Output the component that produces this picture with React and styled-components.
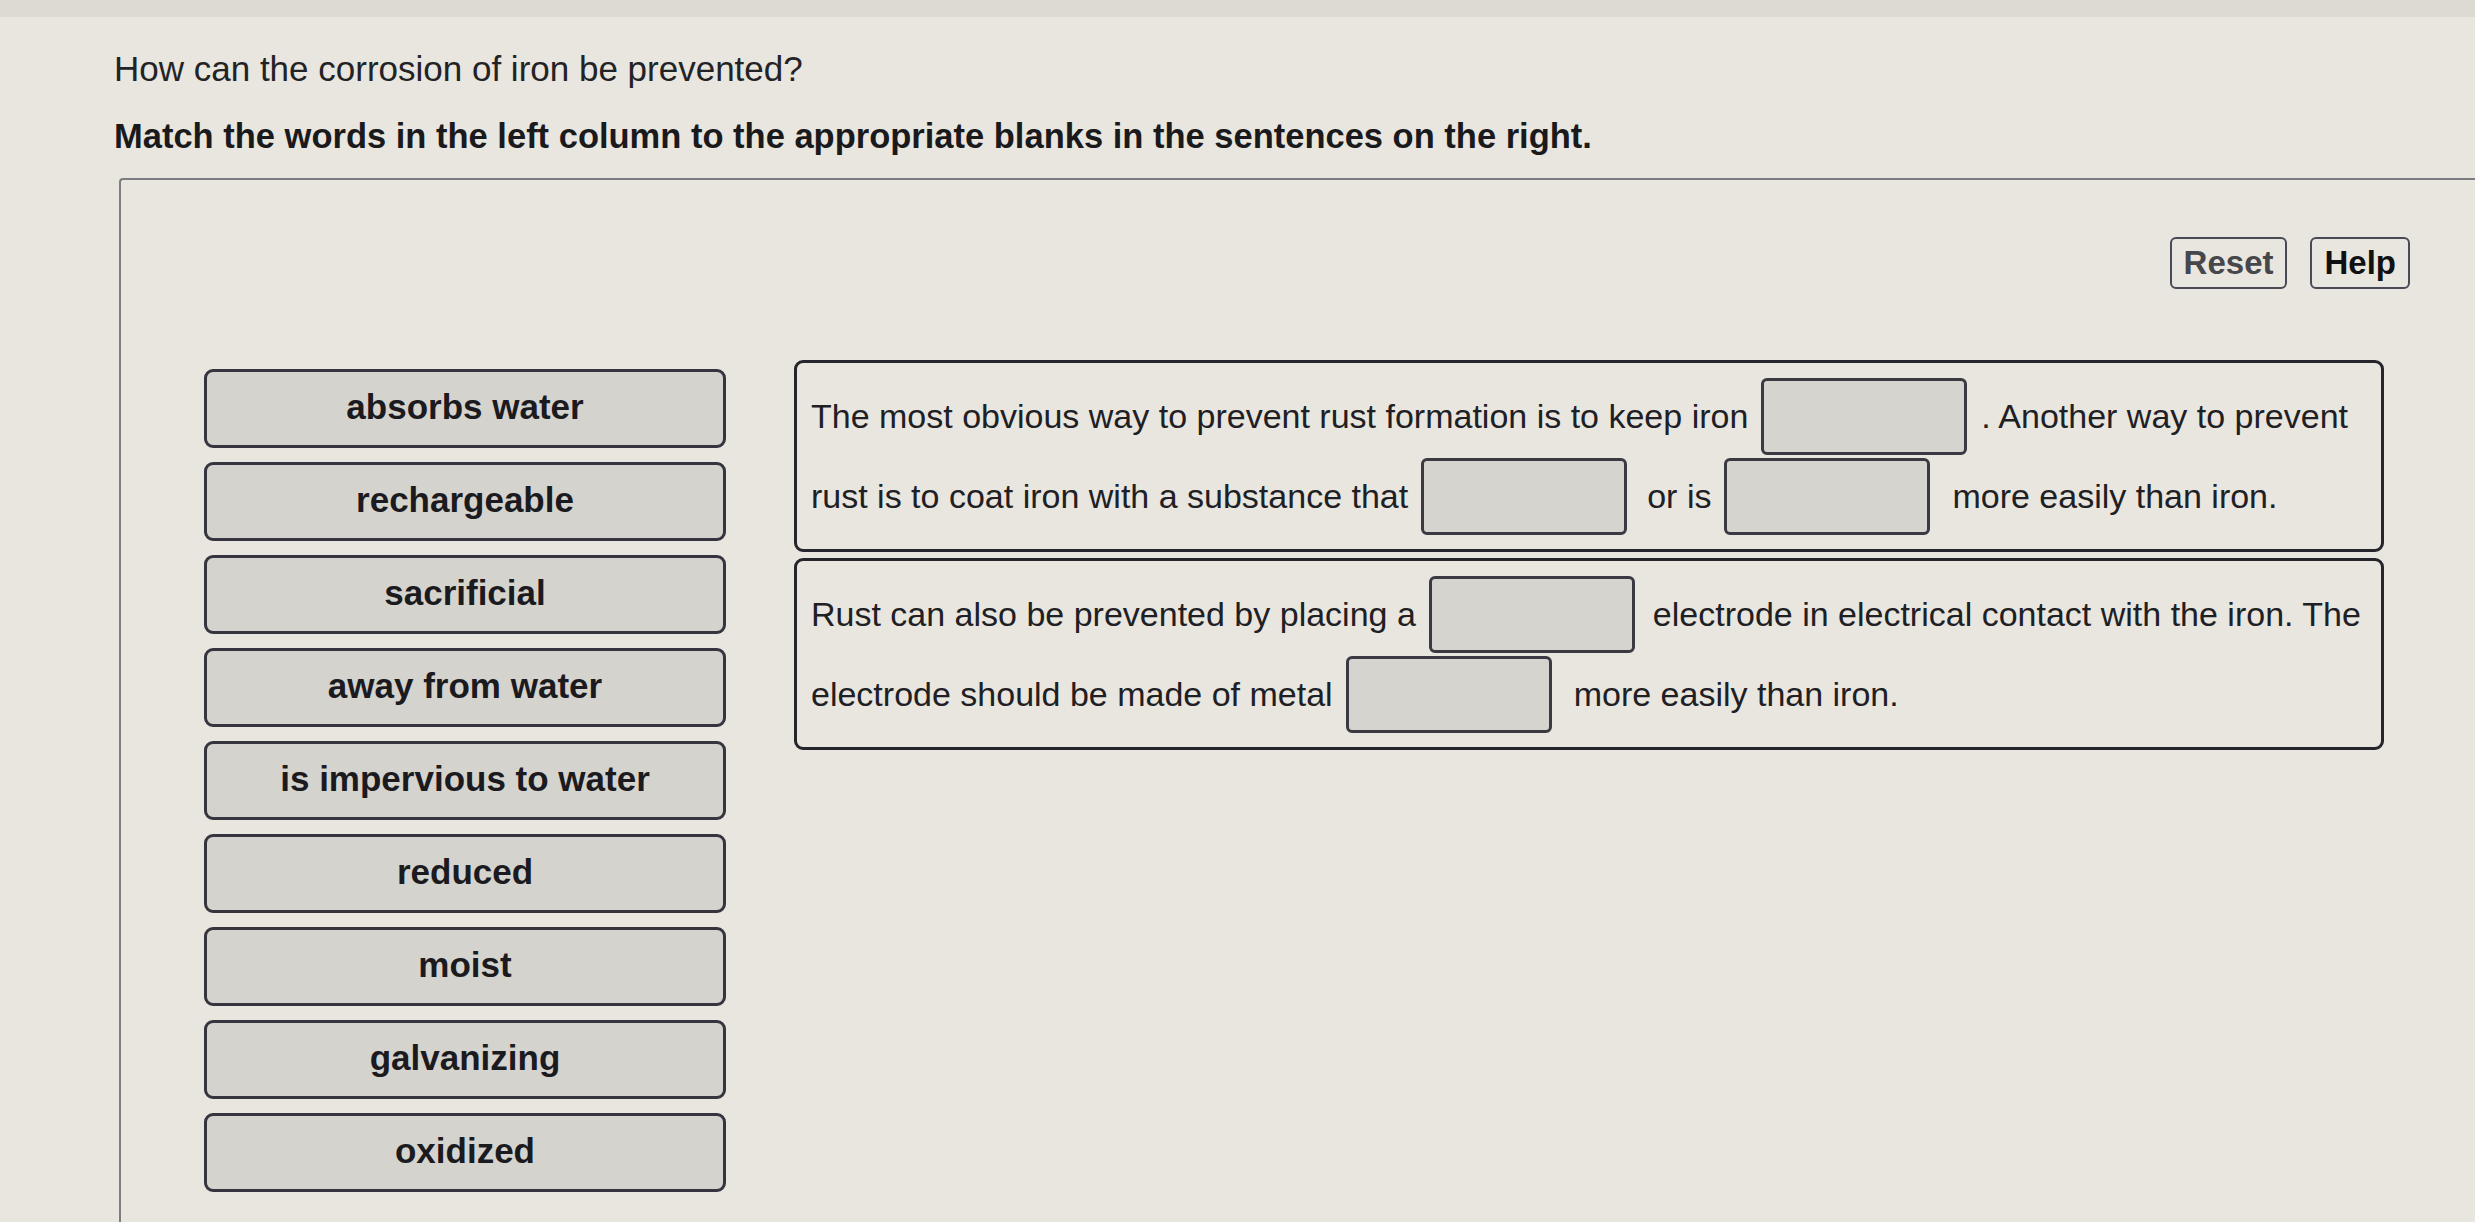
import React from 'react';
import styled, { createGlobalStyle } from 'styled-components';

const GlobalStyle = createGlobalStyle`
  html, body {
    margin: 0;
    padding: 0;
    background: #e8e6df;
  }
  body {
    font-family: "Liberation Sans", Arial, sans-serif;
    color: #1d1d20;
  }
`;

const Page = styled.div`
  min-height: 1222px;
  box-sizing: border-box;
  border-top: 17px solid #dcdad3;
  padding-top: 32px;
  overflow: hidden;
`;

const Intro = styled.div`
  padding-left: 114px;
`;

const Question = styled.p`
  margin: 0;
  font-size: 35px;
  line-height: 40px;
  font-weight: 400;
  color: #232326;
`;

const Instruction = styled.p`
  margin: 27px 0 0;
  font-size: 34.5px;
  line-height: 40px;
  font-weight: 700;
  color: #1a1a1d;
`;

const Panel = styled.section`
  margin: 22px 0 0 119px;
  border-top: 2px solid #7d7c80;
  border-left: 2px solid #7d7c80;
  border-top-left-radius: 4px;
  padding: 57px 65px 40px 0;
  min-height: 1000px;
  box-sizing: border-box;
`;

const Toolbar = styled.div`
  display: flex;
  justify-content: flex-end;
  gap: 23px;
`;

const ToolButton = styled.button`
  height: 52px;
  padding: 0 12px;
  border: 2px solid #4a4956;
  border-radius: 6px;
  background: transparent;
  font-family: inherit;
  font-size: 33px;
  font-weight: 700;
  color: ${p => (p.muted ? '#46464b' : '#111114')};
  cursor: pointer;
`;

const Workspace = styled.div`
  display: flex;
  align-items: flex-start;
  gap: 68px;
  margin-top: 71px;
`;

const WordBank = styled.div`
  display: flex;
  flex-direction: column;
  gap: 14px;
  margin: 9px 0 0 83px;
`;

const WordTile = styled.div`
  width: 522px;
  height: 79px;
  box-sizing: border-box;
  display: flex;
  align-items: center;
  justify-content: center;
  padding-bottom: 4px;
  background: #d5d3ce;
  border: 3px solid #36343e;
  border-radius: 9px;
  font-size: 35px;
  font-weight: 700;
  color: #1b1b1f;
`;

const Sentences = styled.div`
  width: 1590px;
  display: flex;
  flex-direction: column;
  gap: 6px;
`;

const SentenceBox = styled.div`
  border: 3.5px solid #26252c;
  border-radius: 9px;
  padding: 13px 14px;
`;

const Line = styled.div`
  display: flex;
  align-items: center;
  height: 80px;
  white-space: nowrap;
  font-size: 34px;
  color: #202024;
`;

const Blank = styled.span`
  display: inline-block;
  flex: none;
  width: 206px;
  height: 77px;
  box-sizing: border-box;
  margin: 0 ${p => p.after || 16}px 0 13px;
  background: #d6d4cf;
  border: 3px solid #3b3a42;
  border-radius: 6px;
`;

const words = [
  'absorbs water',
  'rechargeable',
  'sacrificial',
  'away from water',
  'is impervious to water',
  'reduced',
  'moist',
  'galvanizing',
  'oxidized',
];

export default function App() {
  return (
    <>
      <GlobalStyle />
      <Page>
        <Intro>
          <Question>How can the corrosion of iron be prevented?</Question>
          <Instruction>
            Match the words in the left column to the appropriate blanks in the sentences on the right.
          </Instruction>
        </Intro>

        <Panel>
          <Toolbar>
            <ToolButton muted>Reset</ToolButton>
            <ToolButton>Help</ToolButton>
          </Toolbar>

          <Workspace>
            <WordBank>
              {words.map(w => (
                <WordTile key={w}>{w}</WordTile>
              ))}
            </WordBank>

            <Sentences>
              <SentenceBox>
                <Line>
                  The most obvious way to prevent rust formation is to keep iron
                  <Blank after={14} />
                  . Another way to prevent
                </Line>
                <Line>
                  rust is to coat iron with a substance that
                  <Blank after={20} />
                  or is
                  <Blank after={22} />
                  more easily than iron.
                </Line>
              </SentenceBox>

              <SentenceBox>
                <Line>
                  Rust can also be prevented by placing a
                  <Blank after={18} />
                  electrode in electrical contact with the iron. The
                </Line>
                <Line>
                  electrode should be made of metal
                  <Blank after={22} />
                  more easily than iron.
                </Line>
              </SentenceBox>
            </Sentences>
          </Workspace>
        </Panel>
      </Page>
    </>
  );
}
